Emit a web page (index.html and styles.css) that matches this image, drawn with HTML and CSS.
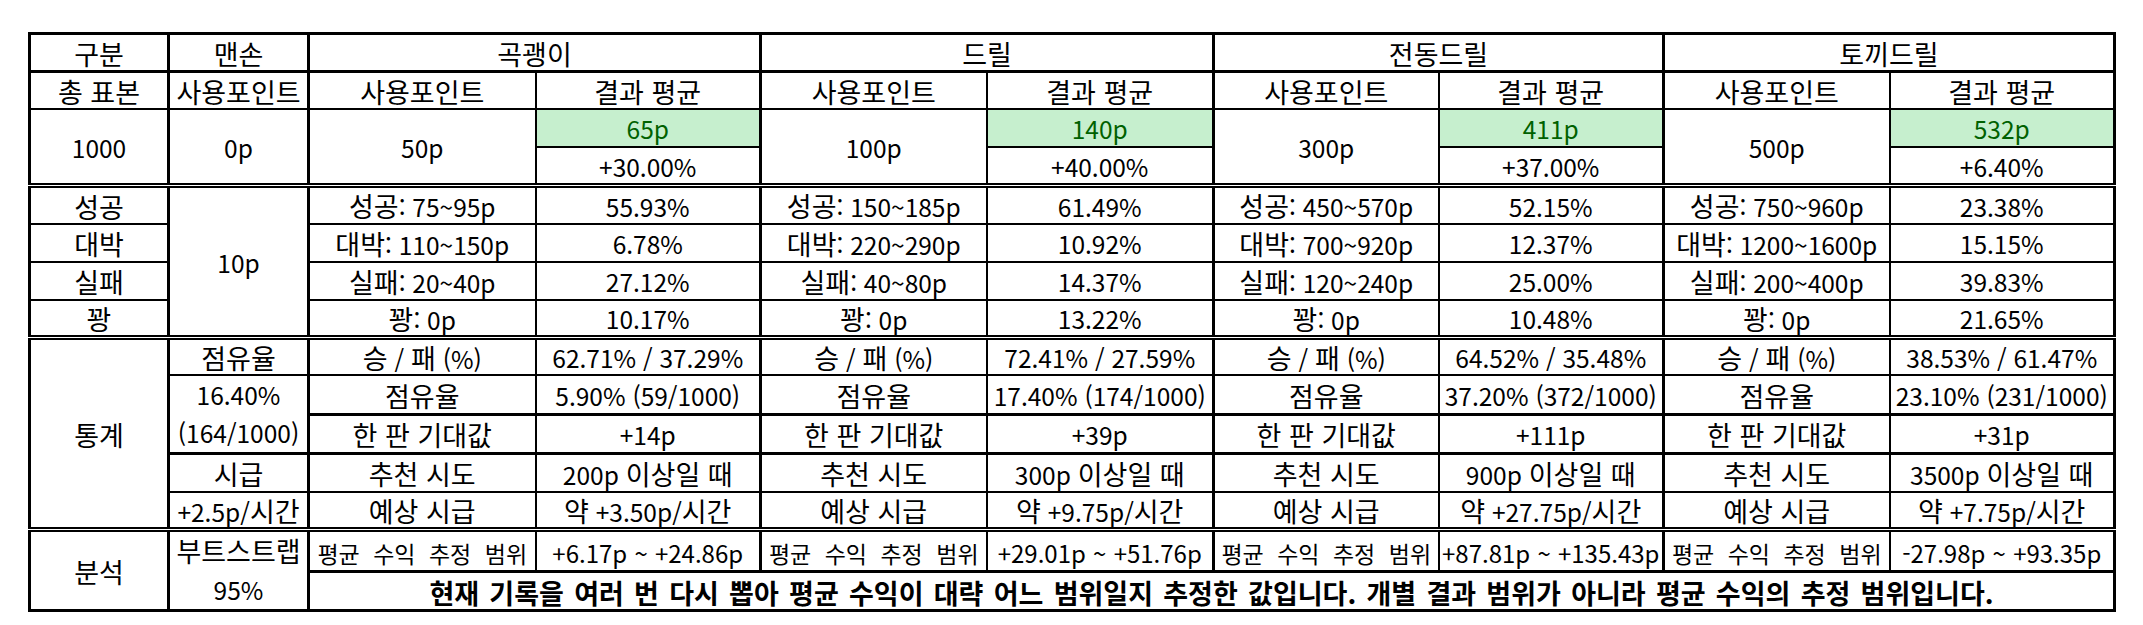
FILE: index.html
```html
<!DOCTYPE html>
<html lang="ko">
<head>
<meta charset="utf-8">
<title>포인트 통계</title>
<link rel="stylesheet" href="styles.css">
</head>
<body>
<div class="sheet">
<table class="grid">
  <colgroup>
    <col class="c1 k"><col class="c2 k">
    <col class="c3"><col class="c4 k">
    <col class="c5"><col class="c6 k">
    <col class="c7"><col class="c8 k">
    <col class="c9"><col class="c10">
  </colgroup>
  <tbody>
    <tr class="r38 k">
      <td class="h">구분</td><td class="h">맨손</td>
      <td colspan="2" class="h">곡괭이</td><td colspan="2" class="h">드릴</td><td colspan="2" class="h">전동드릴</td><td colspan="2" class="h">토끼드릴</td>
    </tr>
    <tr class="r37">
      <td class="h">총 표본</td><td class="h">사용포인트</td>
      <td class="h">사용포인트</td><td class="h">결과 평균</td>
      <td class="h">사용포인트</td><td class="h">결과 평균</td>
      <td class="h">사용포인트</td><td class="h">결과 평균</td>
      <td class="h">사용포인트</td><td class="h">결과 평균</td>
    </tr>
    <tr class="r38">
      <td rowspan="2">1000</td><td rowspan="2">0p</td>
      <td rowspan="2">50p</td><td class="good">65p</td>
      <td rowspan="2">100p</td><td class="good">140p</td>
      <td rowspan="2">300p</td><td class="good">411p</td>
      <td rowspan="2">500p</td><td class="good">532p</td>
    </tr>
    <tr class="r39 d">
      <td>+30.00%</td><td>+40.00%</td><td>+37.00%</td><td>+6.40%</td>
    </tr>
    <tr class="r38">
      <td class="h">성공</td><td rowspan="4">10p</td>
      <td><span class="h">성공</span>: 75~95p</td><td>55.93%</td>
      <td><span class="h">성공</span>: 150~185p</td><td>61.49%</td>
      <td><span class="h">성공</span>: 450~570p</td><td>52.15%</td>
      <td><span class="h">성공</span>: 750~960p</td><td>23.38%</td>
    </tr>
    <tr class="r38">
      <td class="h">대박</td>
      <td><span class="h">대박</span>: 110~150p</td><td>6.78%</td>
      <td><span class="h">대박</span>: 220~290p</td><td>10.92%</td>
      <td><span class="h">대박</span>: 700~920p</td><td>12.37%</td>
      <td><span class="h">대박</span>: 1200~1600p</td><td>15.15%</td>
    </tr>
    <tr class="r38">
      <td class="h">실패</td>
      <td><span class="h">실패</span>: 20~40p</td><td>27.12%</td>
      <td><span class="h">실패</span>: 40~80p</td><td>14.37%</td>
      <td><span class="h">실패</span>: 120~240p</td><td>25.00%</td>
      <td><span class="h">실패</span>: 200~400p</td><td>39.83%</td>
    </tr>
    <tr class="r36 d">
      <td class="h">꽝</td>
      <td><span class="h">꽝</span>: 0p</td><td>10.17%</td>
      <td><span class="h">꽝</span>: 0p</td><td>13.22%</td>
      <td><span class="h">꽝</span>: 0p</td><td>10.48%</td>
      <td><span class="h">꽝</span>: 0p</td><td>21.65%</td>
    </tr>
    <tr class="r38">
      <td rowspan="5" class="h">통계</td><td class="h">점유율</td>
      <td><span class="h">승</span> / <span class="h">패</span> (%)</td><td>62.71% / 37.29%</td>
      <td><span class="h">승</span> / <span class="h">패</span> (%)</td><td>72.41% / 27.59%</td>
      <td><span class="h">승</span> / <span class="h">패</span> (%)</td><td>64.52% / 35.48%</td>
      <td><span class="h">승</span> / <span class="h">패</span> (%)</td><td>38.53% / 61.47%</td>
    </tr>
    <tr class="r38 k">
      <td rowspan="2" class="two">16.40%<br>(164/1000)</td>
      <td class="h">점유율</td><td>5.90% (59/1000)</td>
      <td class="h">점유율</td><td>17.40% (174/1000)</td>
      <td class="h">점유율</td><td>37.20% (372/1000)</td>
      <td class="h">점유율</td><td>23.10% (231/1000)</td>
    </tr>
    <tr class="r38 k">
      <td class="h">한 판 기대값</td><td>+14p</td>
      <td class="h">한 판 기대값</td><td>+39p</td>
      <td class="h">한 판 기대값</td><td>+111p</td>
      <td class="h">한 판 기대값</td><td>+31p</td>
    </tr>
    <tr class="r38">
      <td class="h">시급</td>
      <td class="h">추천 시도</td><td>200p <span class="h">이상일 때</span></td>
      <td class="h">추천 시도</td><td>300p <span class="h">이상일 때</span></td>
      <td class="h">추천 시도</td><td>900p <span class="h">이상일 때</span></td>
      <td class="h">추천 시도</td><td>3500p <span class="h">이상일 때</span></td>
    </tr>
    <tr class="r38 d">
      <td>+2.5p/<span class="h">시간</span></td>
      <td class="h">예상 시급</td><td><span class="h">약</span> +3.50p/<span class="h">시간</span></td>
      <td class="h">예상 시급</td><td><span class="h">약</span> +9.75p/<span class="h">시간</span></td>
      <td class="h">예상 시급</td><td><span class="h">약</span> +27.75p/<span class="h">시간</span></td>
      <td class="h">예상 시급</td><td><span class="h">약</span> +7.75p/<span class="h">시간</span></td>
    </tr>
    <tr class="r39 k">
      <td rowspan="2" class="h">분석</td>
      <td rowspan="2" class="two h">부트스트랩<br><span class="num">95%</span></td>
      <td class="small">평균 수익 추정 범위</td><td class="range">+6.17p ~ +24.86p</td>
      <td class="small">평균 수익 추정 범위</td><td class="range">+29.01p ~ +51.76p</td>
      <td class="small">평균 수익 추정 범위</td><td class="range">+87.81p ~ +135.43p</td>
      <td class="small">평균 수익 추정 범위</td><td class="range">-27.98p ~ +93.35p</td>
    </tr>
    <tr class="r36">
      <td colspan="8" class="note">현재 기록을 여러 번 다시 뽑아 평균 수익이 대략 어느 범위일지 추정한 값입니다. 개별 결과 범위가 아니라 평균 수익의 추정 범위입니다.</td>
    </tr>
  </tbody>
</table>
</div>
</body>
</html>
```
FILE: styles.css
```css
html, body {
  margin: 0;
  padding: 0;
  background: #ffffff;
}

.sheet {
  padding: 32px 0 0 28px;
}

.grid {
  border-collapse: collapse;
  table-layout: fixed;
  width: 2088px;
  border: 3px solid #000;
  font-family: "Noto Sans CJK KR", "Noto Sans", sans-serif;
  font-size: 24.5px;
  color: #000;
}

.c1 { width: 139px; }
.c2 { width: 140px; }
.c3 { width: 227px; }
.c4 { width: 225px; }
.c5 { width: 226px; }
.c6 { width: 227px; }
.c7 { width: 225px; }
.c8 { width: 225px; }
.c9 { width: 226px; }
.c10 { width: 225px; }

col.k { border-right: 3px solid #000; }

tr.k { border-bottom: 3px solid #000; }
tr.d { border-bottom: 5px double #000; }

.r36 { height: 36px; }
.r37 { height: 37px; }
.r38 { height: 38px; }
.r39 { height: 39px; }

.grid td {
  border: 2px solid #000;
  padding: 3px 0 0 0;
  text-align: center;
  vertical-align: middle;
  white-space: nowrap;
  line-height: 30px;
}

.grid .h {
  font-size: 27px;
  line-height: 30px;
}

.grid .num {
  font-size: 24.5px;
}

.grid td.good {
  background: #c6efce;
  color: #006100;
}

.grid td.two {
  line-height: 38px;
  padding-top: 0;
}

.grid td.small {
  font-size: 23px;
  word-spacing: 7px;
}

.grid td.range {
  font-size: 24px;
  word-spacing: 0.5px;
}

.grid td.note {
  font-size: 27px;
  font-weight: 700;
  word-spacing: 2.7px;
}
```
